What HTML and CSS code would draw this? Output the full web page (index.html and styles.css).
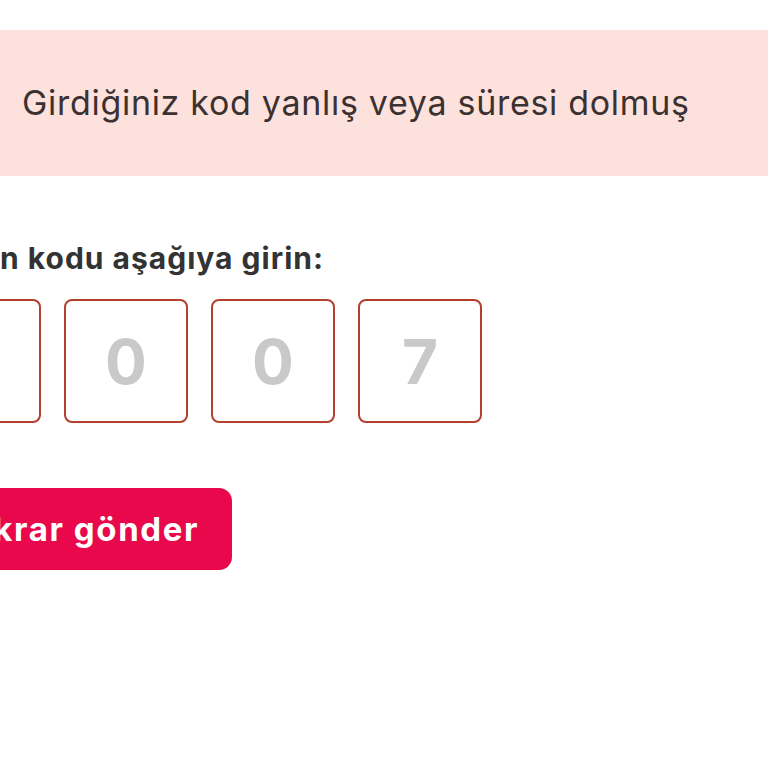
FILE: index.html
```html
<!DOCTYPE html>
<html lang="tr">
<head>
<meta charset="utf-8">
<title>Kod doğrulama</title>
<link rel="stylesheet" href="styles.css">
</head>
<body>
  <div class="banner">
    <p class="banner-text">Girdiğiniz kod yanlış veya süresi dolmuş</p>
  </div>
  <main class="content">
    <p class="label">n kodu aşağıya girin:</p>
    <div class="code-row">
      <div class="code-box">1</div>
      <div class="code-box">0</div>
      <div class="code-box">0</div>
      <div class="code-box">7</div>
    </div>
    <button class="resend" type="button">Tekrar gönder</button>
  </main>
</body>
</html>
```

FILE: styles.css
```css
html, body {
  margin: 0;
  padding: 0;
  background: #ffffff;
  width: 768px;
  height: 768px;
  overflow: hidden;
  font-family: Inter, "Noto Sans", "Liberation Sans", sans-serif;
}

.banner {
  margin-top: 30px;
  height: 146px;
  background: #fde1dd;
  display: flex;
  align-items: center;
  padding-left: 22px;
}

.banner-text {
  margin: 0;
  font-size: 34px;
  line-height: 40px;
  letter-spacing: 0.7px;
  color: #3b3131;
  font-weight: 400;
}

.content {
  margin-left: -83px;
  display: flex;
  flex-direction: column;
  align-items: flex-start;
}

.label {
  margin: 64px 0 0 83px;
  font-size: 30px;
  line-height: 36px;
  letter-spacing: 1px;
  font-weight: 700;
  color: #333333;
}

.code-row {
  display: flex;
  gap: 23px;
  margin-top: 23px;
}

.code-box {
  width: 124px;
  height: 124px;
  box-sizing: border-box;
  border: 2px solid #b3412c;
  border-radius: 8px;
  display: flex;
  align-items: center;
  justify-content: center;
  font-size: 62px;
  font-weight: 700;
  color: #c9c9c9;
}

.resend {
  margin-top: 65px;
  margin-left: 2px;
  height: 82px;
  padding: 0 33px 0 32px;
  border: none;
  border-radius: 13px;
  background: #e8084b;
  color: #ffffff;
  font-family: Inter, "Noto Sans", "Liberation Sans", sans-serif;
  font-size: 33px;
  letter-spacing: 1.6px;
  font-weight: 700;
}
```
